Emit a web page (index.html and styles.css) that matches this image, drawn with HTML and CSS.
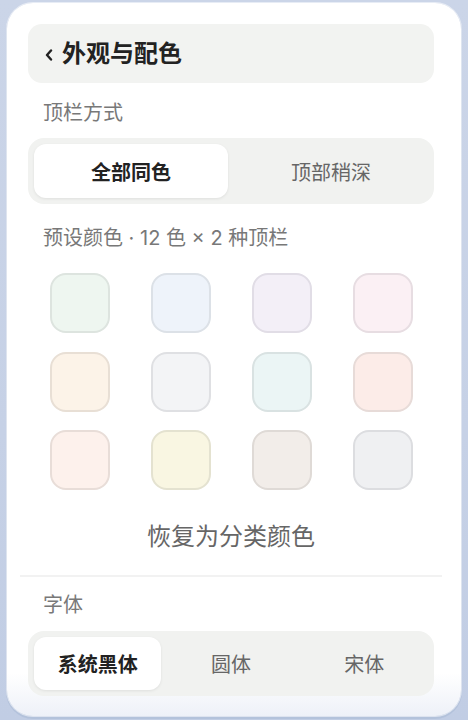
FILE: index.html
```html
<!DOCTYPE html>
<html lang="zh-CN">
<head>
    <meta charset="UTF-8">
    <meta name="viewport" content="width=device-width, initial-scale=1.0">
    <title>外观与配色</title>
    <link rel="stylesheet" href="styles.css">
</head>
<body>
    <div class="panel">
        <div class="panel-header">
            <svg class="back-icon" width="8" height="12" viewBox="0 0 8 12">
                <path d="M6 1.5 L2 6 L6 10.5" fill="none" stroke="#222" stroke-width="2.4" stroke-linecap="round" stroke-linejoin="round"/>
            </svg>
            <span>外观与配色</span>
        </div>

        <div class="section-label">顶栏方式</div>
        <div class="segmented">
            <button class="segment active">全部同色</button>
            <button class="segment">顶部稍深</button>
        </div>

        <div class="section-label label-presets">预设颜色 · 12 色 × 2 种顶栏</div>
        <div class="swatch-grid">
            <button class="swatch" style="background:#eef6f0;border-color:#dde4df"></button>
            <button class="swatch" style="background:#eef3fa;border-color:#dce1e7"></button>
            <button class="swatch" style="background:#f3eff7;border-color:#e1dde6"></button>
            <button class="swatch" style="background:#fbf0f4;border-color:#e7dde2"></button>
            <button class="swatch" style="background:#fcf3e8;border-color:#e8dfd5"></button>
            <button class="swatch" style="background:#f3f4f6;border-color:#dfe0e3"></button>
            <button class="swatch" style="background:#ebf5f5;border-color:#d9e2e2"></button>
            <button class="swatch" style="background:#fcece8;border-color:#e7dbd8"></button>
            <button class="swatch" style="background:#fdf1ec;border-color:#e8ddd8"></button>
            <button class="swatch" style="background:#f9f6e2;border-color:#e4e2d0"></button>
            <button class="swatch" style="background:#f2ede9;border-color:#dfdad6"></button>
            <button class="swatch" style="background:#eff0f2;border-color:#dcdde0"></button>
        </div>

        <div class="reset-link">恢复为分类颜色</div>

        <div class="divider"></div>

        <div class="section-label label-font">字体</div>
        <div class="segmented three">
            <button class="segment active">系统黑体</button>
            <button class="segment">圆体</button>
            <button class="segment">宋体</button>
        </div>
    </div>
</body>
</html>
```

FILE: styles.css
```css
body {
    margin: 0;
    height: 720px;
    overflow: hidden;
    background: linear-gradient(180deg, #cbd5e8 0%, #c6d1e6 60%, #c1cde4 100%);
    font-family: Inter, "Noto Sans CJK SC", "Noto Sans", sans-serif;
    color: #222;
}

.panel {
    box-sizing: border-box;
    margin: 3px 7px 0 7px;
    height: 713px;
    padding: 21px 27px 0 21px;
    border-radius: 26px;
    background: linear-gradient(180deg, #ffffff 0%, #ffffff 94%, #eef1f8 100%);
    box-shadow: 0 0 0 1px rgba(255, 255, 255, 0.55), 0 2px 0 1px rgba(170, 186, 214, 0.6);
}

.panel-header {
    display: flex;
    align-items: center;
    gap: 9px;
    height: 59px;
    padding-left: 17px;
    border-radius: 14px;
    background-color: #f2f3f1;
    font-size: 24px;
    font-weight: 700;
    line-height: 1;
}

.back-icon {
    margin-top: 2px;
}

.section-label {
    margin: 16px 0 11px;
    padding-left: 15px;
    font-size: 20px;
    line-height: 28px;
    color: #787878;
}

.label-presets {
    margin: 20px 0 21px;
}

.label-font {
    margin: 14px 0 12px;
}

.segmented {
    display: flex;
    gap: 6px;
    height: 66px;
    box-sizing: border-box;
    padding: 6px;
    border-radius: 16px;
    background-color: #f1f2f0;
}

.segmented.three {
    height: 65px;
}

.segment {
    flex: 1;
    border: none;
    border-radius: 12px;
    background: transparent;
    font-family: inherit;
    font-size: 20px;
    color: #666;
    padding: 0;
}

.segment.active {
    background-color: #ffffff;
    color: #222;
    font-weight: 700;
    box-shadow: 0 1px 3px rgba(0, 0, 0, 0.08);
}

.swatch-grid {
    display: grid;
    grid-template-columns: repeat(4, 60px);
    column-gap: 41px;
    row-gap: 18.5px;
    padding-left: 22px;
}

.swatch {
    width: 60px;
    height: 60px;
    box-sizing: border-box;
    border: 2px solid #ddd;
    border-radius: 16px;
    padding: 0;
}

.reset-link {
    margin-top: 31px;
    text-align: center;
    font-size: 24px;
    line-height: 32px;
    color: #666;
}

.divider {
    height: 2px;
    margin: 22px -8px 0 -8px;
    background-color: #f2f2f2;
}
```
